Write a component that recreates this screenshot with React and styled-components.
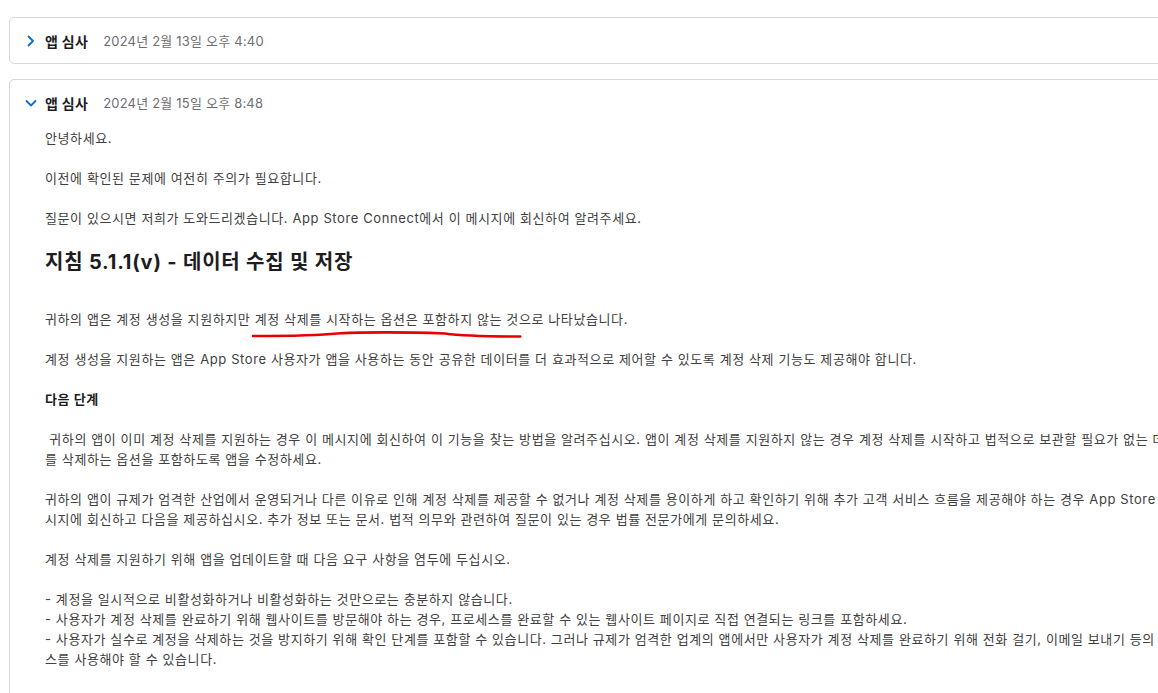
import React from 'react';
import styled, { createGlobalStyle } from 'styled-components';

const GlobalStyle = createGlobalStyle`
  html, body {
    margin: 0;
    padding: 0;
    background: #fff;
    overflow: hidden;
  }
  body {
    font-family: Inter, "Noto Sans CJK KR", "Noto Sans", sans-serif;
    color: #1d1d1f;
  }
`;

const Page = styled.div`
  width: 1158px;
  height: 693px;
  overflow: hidden;
  padding: 17px 0 0 9px;
  box-sizing: border-box;
  display: flex;
  flex-direction: column;
  gap: 15px;
`;

const Card = styled.section`
  width: 1240px;
  flex-shrink: 0;
  border: 1px solid #d6d6d6;
  border-radius: 5px;
  background: #fff;
`;

const CardHeader = styled.div`
  height: 45px;
  display: flex;
  align-items: center;
  padding-left: 15px;
  gap: 8px;
`;

const Toggle = styled.span`
  width: 12px;
  height: 12px;
  display: flex;
  align-items: center;
  justify-content: center;
  color: #0a6fd1;
`;

const Title = styled.span`
  font-size: 14px;
  font-weight: 700;
  letter-spacing: 0.3px;
  color: #1d1d1f;
`;

const Stamp = styled.span`
  font-size: 13px;
  letter-spacing: 0.2px;
  color: #6e6e73;
  margin-left: 7px;
`;

const Body = styled.div`
  padding: 3px 0 20px 35px;
  font-size: 13px;
  line-height: 20px;
  letter-spacing: 0.6px;
  color: #404040;
`;

const Para = styled.p`
  margin: 0 0 20px;
  white-space: nowrap;
  font-weight: ${p => (p.$bold ? 700 : 400)};
  color: ${p => (p.$bold ? '#1d1d1f' : '#404040')};
`;

const Heading = styled.h2`
  margin: 0 0 33px;
  font-size: 20px;
  line-height: 28px;
  font-weight: 700;
  letter-spacing: 0.8px;
  color: #1d1d1f;
`;

const Marked = styled.span`
  position: relative;
`;

// hand-drawn red mark under the key phrase
const Scribble = styled.svg`
  position: absolute;
  left: -3px;
  top: 20px;
  width: calc(100% + 6px);
  height: 8px;
  overflow: visible;
  pointer-events: none;
`;

const Chevron = ({ open }) => (
  <svg width="12" height="12" viewBox="0 0 12 12" fill="none" stroke="currentColor"
    strokeWidth="1.8" strokeLinecap="round" strokeLinejoin="round">
    {open ? <polyline points="1.5,4 6,8.5 10.5,4" /> : <polyline points="3.5,1.5 8,6 3.5,10.5" />}
  </svg>
);

const Review = ({ open, date, children }) => (
  <Card>
    <CardHeader>
      <Toggle><Chevron open={open} /></Toggle>
      <Title>앱 심사</Title>
      <Stamp>{date}</Stamp>
    </CardHeader>
    {open && children}
  </Card>
);

export default function App() {
  return (
    <>
      <GlobalStyle />
      <Page>
        <Review date="2024년 2월 13일 오후 4:40" />
        <Review open date="2024년 2월 15일 오후 8:48">
          <Body>
            <Para>안녕하세요.</Para>
            <Para>이전에 확인된 문제에 여전히 주의가 필요합니다.</Para>
            <Para>질문이 있으시면 저희가 도와드리겠습니다. App Store Connect에서 이 메시지에 회신하여 알려주세요.</Para>
            <Heading>지침 5.1.1(v) - 데이터 수집 및 저장</Heading>
            <Para>
              귀하의 앱은 계정 생성을 지원하지만{' '}
              <Marked>
                계정 삭제를 시작하는 옵션은 포함하지 않는 것
                <Scribble viewBox="0 0 280 8" preserveAspectRatio="none">
                  <path d="M1 5 C 40 5, 70 4.5, 88 2.5 C 120 1, 170 1.5, 200 2.5 C 215 4.5, 240 5.5, 278 5.5"
                    stroke="#e60000" strokeWidth="2.6" fill="none" strokeLinecap="round" />
                </Scribble>
              </Marked>
              으로 나타났습니다.
            </Para>
            <Para>계정 생성을 지원하는 앱은 App Store 사용자가 앱을 사용하는 동안 공유한 데이터를 더 효과적으로 제어할 수 있도록 계정 삭제 기능도 제공해야 합니다.</Para>
            <Para $bold>다음 단계</Para>
            <Para>
              &nbsp;귀하의 앱이 이미 계정 삭제를 지원하는 경우 이 메시지에 회신하여 이 기능을 찾는 방법을 알려주십시오. 앱이 계정 삭제를 지원하지 않는 경우 계정 삭제를 시작하고 법적으로 보관할 필요가 없는 데이터<br />
              를 삭제하는 옵션을 포함하도록 앱을 수정하세요.
            </Para>
            <Para>
              귀하의 앱이 규제가 엄격한 산업에서 운영되거나 다른 이유로 인해 계정 삭제를 제공할 수 없거나 계정 삭제를 용이하게 하고 확인하기 위해 추가 고객 서비스 흐름을 제공해야 하는 경우 App Store Connect에서 이 메<br />
              시지에 회신하고 다음을 제공하십시오. 추가 정보 또는 문서. 법적 의무와 관련하여 질문이 있는 경우 법률 전문가에게 문의하세요.
            </Para>
            <Para>계정 삭제를 지원하기 위해 앱을 업데이트할 때 다음 요구 사항을 염두에 두십시오.</Para>
            <Para>
              - 계정을 일시적으로 비활성화하거나 비활성화하는 것만으로는 충분하지 않습니다.<br />
              - 사용자가 계정 삭제를 완료하기 위해 웹사이트를 방문해야 하는 경우, 프로세스를 완료할 수 있는 웹사이트 페이지로 직접 연결되는 링크를 포함하세요.<br />
              - 사용자가 실수로 계정을 삭제하는 것을 방지하기 위해 확인 단계를 포함할 수 있습니다. 그러나 규제가 엄격한 업계의 앱에서만 사용자가 계정 삭제를 완료하기 위해 전화 걸기, 이메일 보내기 등의 기타 고객 서비스 프로세<br />
              스를 사용해야 할 수 있습니다.
            </Para>
          </Body>
        </Review>
      </Page>
    </>
  );
}
